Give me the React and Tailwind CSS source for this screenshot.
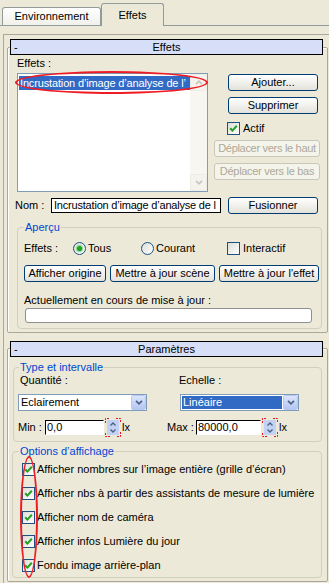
import React from "react";

function Check() {
  return (
    <svg width="11" height="11" viewBox="0 0 11 11" className="block">
      <path d="M2.2 5.2 L4.4 7.6 L8.8 2.8" fill="none" stroke="#21a121" strokeWidth="2" />
    </svg>
  );
}

function Checkbox({ checked }) {
  return (
    <div className="w-[13px] h-[13px] shrink-0 border border-[#1c5180] bg-linear-to-br from-[#dcdcd7] to-[#ffffff] flex items-center justify-center">
      {checked && <Check />}
    </div>
  );
}

function Radio({ checked }) {
  return (
    <div className="w-[13px] h-[13px] shrink-0 rounded-full border border-[#1c5180] bg-linear-to-br from-[#dcdcd7] to-[#ffffff] flex items-center justify-center">
      {checked && <div className="w-[5px] h-[5px] rounded-full bg-[#21a121] shadow-[0_0_1px_1px_#7fd87f]" />}
    </div>
  );
}

function Btn({ children, className = "", disabled }) {
  return (
    <div
      className={`h-[17px] shrink-0 flex items-center justify-center rounded-[3px] border whitespace-nowrap leading-none ${
        disabled
          ? "border-[#c9c7ba] bg-[#f5f4ea] text-[#aca899]"
          : "border-[#003c74] bg-linear-to-b from-[#ffffff] to-[#e3e2da]"
      } ${className}`}
    >
      {children}
    </div>
  );
}

function DropBtn() {
  return (
    <div className="w-[15px] h-[15px] shrink-0 rounded-[2px] border border-[#bac8f0] bg-linear-to-b from-[#dbe5fc] to-[#b4c6f2] flex items-center justify-center">
      <svg width="8" height="5" viewBox="0 0 8 5" className="block">
        <path d="M1 0.8 L4 3.8 L7 0.8" fill="none" stroke="#4d6185" strokeWidth="1.7" />
      </svg>
    </div>
  );
}

function ScrollBtn({ up }) {
  return (
    <div className="w-[17px] h-[17px] rounded-[2px] border border-[#eeede5] bg-[#f4f3ee] flex items-center justify-center">
      <svg width="8" height="5" viewBox="0 0 8 5" className="block">
        <path d={up ? "M1 4.2 L4 1.2 L7 4.2" : "M1 0.8 L4 3.8 L7 0.8"} fill="none" stroke="#c9c7ba" strokeWidth="1.7" />
      </svg>
    </div>
  );
}

function Spinner() {
  return (
    <div className="relative w-[12px] h-[15px] shrink-0 flex flex-col bg-[#c3d2f4]">
      <div className="flex-1 flex items-center justify-center">
        <svg width="6" height="4" viewBox="0 0 6 4" className="block">
          <path d="M0.5 3.5 L3 1 L5.5 3.5" fill="none" stroke="#4d6185" strokeWidth="1.4" />
        </svg>
      </div>
      <div className="flex-1 flex items-center justify-center">
        <svg width="6" height="4" viewBox="0 0 6 4" className="block">
          <path d="M0.5 0.5 L3 3 L5.5 0.5" fill="none" stroke="#4d6185" strokeWidth="1.4" />
        </svg>
      </div>
      <svg className="absolute -left-[2px] -top-[2px]" width="16" height="19" viewBox="0 0 16 19">
        <path
          d="M0.5 5 V0.5 H5 M11 0.5 H15.5 V5 M15.5 14 V18.5 H11 M5 18.5 H0.5 V14"
          fill="none"
          stroke="#e8141c"
          strokeWidth="1"
          strokeDasharray="2 1"
        />
      </svg>
    </div>
  );
}

function Header({ title, className = "" }) {
  return (
    <div className={`ml-[2px] w-[313px] h-[16px] border border-black bg-[#d6dff7] flex items-center ${className}`}>
      <span className="w-[12px] pl-[3px]">-</span>
      <span className="flex-1 text-center">{title}</span>
      <span className="w-[12px]" />
    </div>
  );
}

const options = [
  "Afficher nombres sur l’image entière (grille d’écran)",
  "Afficher nbs à partir des assistants de mesure de lumière",
  "Afficher nom de caméra",
  "Afficher infos Lumière du jour",
  "Fondu image arrière-plan",
];

export default function App() {
  return (
    <div className="relative w-[329px] h-[583px] overflow-hidden bg-[#ece9d8] text-black text-[11px] leading-[13px] font-['Liberation_Sans',Arial,sans-serif]">
      {/* Tabs */}
      <div className="flex items-end h-[26px] pl-[2px] border-b border-[#919b9c]">
        <div className="w-[99px] h-[18px] flex items-center justify-center border border-b-0 border-[#919b9c] rounded-t-[3px] bg-linear-to-b from-[#ffffff] to-[#f1f0ea]">
          Environnement
        </div>
        <div className="w-[63px] h-[23px] -mb-px flex items-center justify-center border border-b-0 border-[#919b9c] rounded-t-[3px] bg-[#ece9d8]">
          Effets
        </div>
      </div>

      {/* Rollout area */}
      <div className="ml-[3px] mt-[8px] border-l border-t border-[#aca899] h-[600px]">
        {/* Effets rollout */}
        <div className="ml-[3px] mt-[12px] w-[321px] h-[286px] border border-[#aca899] rounded-[2px] shadow-[inset_1px_1px_0_#ffffff]">
          <Header title="Effets" className="-mt-[9px]" />

          <div className="flex pl-[9px]">
            <div className="w-[191px] shrink-0">
              <div className="mt-[2px] h-[13px]">Effets :</div>
              <div className="mt-[3px] h-[119px] border border-[#7f9db9] bg-white flex">
                <div className="flex-1 min-w-0 pt-[2px] pl-[1px]">
                  <div className="h-[14px] bg-[#316ac5] text-white whitespace-nowrap overflow-hidden leading-[14px] pl-[1px] tracking-[-0.15px]">
                    Incrustation d’image d’analyse de l’
                  </div>
                </div>
                <div className="w-[17px] bg-[#f7f6f1] flex flex-col justify-between">
                  <ScrollBtn up />
                  <ScrollBtn />
                </div>
              </div>
            </div>
            <div className="ml-[6px] mt-[19px] flex flex-col">
              <Btn className="ml-[14px] w-[90px]">Ajouter...</Btn>
              <Btn className="ml-[14px] mt-[6px] w-[90px]">Supprimer</Btn>
              <div className="ml-[13px] mt-[8px] flex items-center h-[13px]">
                <Checkbox checked />
                <span className="ml-[3px]">Actif</span>
              </div>
              <Btn disabled className="mt-[5px] w-[106px] tracking-[-0.3px]">Déplacer vers le haut</Btn>
              <Btn disabled className="mt-[6px] w-[106px] tracking-[-0.3px]">Déplacer vers le bas</Btn>
            </div>
          </div>

          <div className="mt-[5px] flex items-center h-[17px] pl-[7px]">
            <span className="w-[36px] shrink-0">Nom :</span>
            <div className="w-[170px] h-[15px] shrink-0 border border-black bg-white overflow-hidden whitespace-nowrap leading-[13px] pl-[2px] tracking-[-0.2px]">
              Incrustation d’image d’analyse de l
            </div>
            <Btn className="ml-[7px] w-[90px]">Fusionner</Btn>
          </div>

          <fieldset className="ml-[9px] mt-[7px] w-[305px] border border-[#d0d0bf] rounded-[4px] pl-[6px] pb-[5px]">
            <legend className="px-[1px] text-[#0046d5] leading-[13px]">Aperçu</legend>
            <div className="mt-[8px] flex items-center h-[13px]">
              <span className="w-[49px] shrink-0">Effets :</span>
              <div className="w-[68px] shrink-0 flex items-center">
                <Radio checked />
                <span className="ml-[2px]">Tous</span>
              </div>
              <div className="w-[86px] shrink-0 flex items-center">
                <Radio />
                <span className="ml-[2px]">Courant</span>
              </div>
              <div className="flex items-center">
                <Checkbox />
                <span className="ml-[3px]">Interactif</span>
              </div>
            </div>
            <div className="mt-[10px] flex">
              <Btn className="w-[82px]">Afficher origine</Btn>
              <Btn className="ml-[4px] w-[105px]">Mettre à jour scène</Btn>
              <Btn className="ml-[4px] w-[100px]">Mettre à jour l'effet</Btn>
            </div>
            <div className="mt-[12px] h-[13px]">Actuellement en cours de mise à jour :</div>
            <div className="mt-[1px] ml-[1px] w-[287px] h-[15px] rounded-[3px] border border-[#8e8f8f] bg-white" />
          </fieldset>
        </div>

        {/* Paramètres rollout */}
        <div className="ml-[3px] mt-[15px] w-[321px] h-[234px] border border-[#aca899] rounded-[2px] shadow-[inset_1px_1px_0_#ffffff]">
          <Header title="Paramètres" className="-mt-[8px]" />

          <fieldset className="ml-[5px] mt-[4px] w-[309px] border border-[#d0d0bf] rounded-[4px] pl-[4px] pb-[6px]">
            <legend className="ml-[1px] px-[1px] text-[#0046d5] leading-[13px]">Type et intervalle</legend>
            <div className="flex h-[13px] pl-[2px]">
              <span className="w-[159px] shrink-0">Quantité :</span>
              <span>Echelle :</span>
            </div>
            <div className="mt-[7px] flex">
              <div className="w-[129px] h-[17px] border border-[#7f9db9] bg-white flex items-center">
                <span className="flex-1 pl-[2px] whitespace-nowrap">Eclairement</span>
                <DropBtn />
              </div>
              <div className="ml-[33px] w-[119px] h-[17px] border border-[#7f9db9] bg-white flex items-center">
                <div className="flex-1 h-full p-[1px]">
                  <div className="h-full bg-[#316ac5] text-white pl-[1px] leading-[13px]">Linéaire</div>
                </div>
                <DropBtn />
              </div>
            </div>
            <div className="mt-[9px] flex items-center h-[15px]">
              <div className="w-[149px] shrink-0 flex items-center">
                <span className="w-[27px] shrink-0">Min :</span>
                <div className="w-[59px] h-[15px] border border-t-black border-l-black border-r-white border-b-white bg-white pl-[1px] leading-[13px]">0,0</div>
                <div className="ml-[3px]">
                  <Spinner />
                </div>
                <span className="ml-[3px]">lx</span>
              </div>
              <span className="w-[29px] shrink-0">Max :</span>
              <div className="w-[65px] h-[15px] border border-t-black border-l-black border-r-white border-b-white bg-white pl-[1px] leading-[13px]">80000,0</div>
              <div className="ml-[3px]">
                <Spinner />
              </div>
              <span className="ml-[3px]">lx</span>
            </div>
          </fieldset>

          <fieldset className="ml-[4px] mt-[3px] w-[310px] border border-[#d0d0bf] rounded-[4px] pl-[9px]">
            <legend className="-ml-[3px] px-[1px] text-[#0046d5] leading-[13px]">Options d’affichage</legend>
            <div className="-mt-[1px]">
              {options.map((o) => (
                <div key={o} className="h-[24px] flex items-center whitespace-nowrap">
                  <Checkbox checked />
                  <span className="ml-[2px]">{o}</span>
                </div>
              ))}
            </div>
          </fieldset>
        </div>
      </div>

      {/* red annotation ellipses */}
      <div className="absolute left-[15px] top-[71px] w-[193px] h-[23px] rounded-[50%] border-2 border-[#ee1c25]" />
      <div className="absolute left-[20px] top-[456px] w-[18px] h-[122px] rounded-[50%] border-2 border-[#ee1c25]" />
    </div>
  );
}
